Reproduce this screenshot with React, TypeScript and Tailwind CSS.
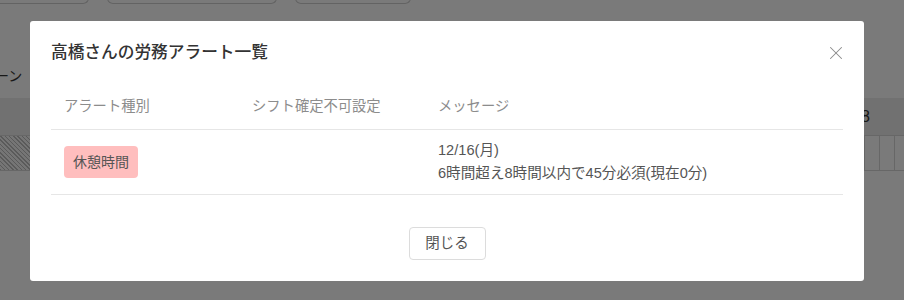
import { X } from 'lucide-react';

const font = { fontFamily: '"Liberation Sans", "Noto Sans CJK JP", sans-serif' };

const Page = () => (
  <div className="h-[300px] w-[904px] overflow-hidden bg-white text-[#333]">
    {/* top toolbar buttons, cut off above the window */}
    <div className="flex h-[4px] items-end">
      <div className="-ml-2 h-[10px] w-[97px] rounded-b-md border border-t-0 border-[#d0d0d0]" />
      <div className="ml-[18px] h-[10px] w-[170px] rounded-b-md border border-t-0 border-[#d0d0d0]" />
      <div className="ml-[18px] h-[10px] w-[116px] rounded-b-md border border-t-0 border-[#d0d0d0]" />
    </div>
    <div className="mt-[62px] -ml-[5px] text-sm">ーン</div>
    <div className="mt-[12px] flex h-[37px] items-center justify-end bg-[#ececec] pr-[34px] text-base">
      <span>8</span>
    </div>
    <div className="flex h-[36px] border-y border-[#d8d8d8]">
      <div className="w-[34px] bg-[repeating-linear-gradient(45deg,#bdbdbd_0px,#bdbdbd_1px,#f4f4f4_1px,#f4f4f4_3px)]" />
      <div className="flex-1" />
      <div className="flex">
        <div className="w-[8px] border-l border-[#d8d8d8]" />
        <div className="w-[15px] border-l border-[#d8d8d8]" />
        <div className="w-[15px] border-l border-[#d8d8d8]" />
        <div className="w-[10px] border-l border-[#d8d8d8]" />
      </div>
    </div>
  </div>
);

export default function App() {
  return (
    <div className="relative h-[300px] w-[904px] overflow-hidden" style={font}>
      <Page />
      <div className="absolute inset-0 bg-black/[0.52]" />
      <div className="absolute left-[30px] top-[21px] w-[834px] rounded-[3px] bg-white px-[21px] pb-[21px]">
        <div className="flex h-[64px] items-center justify-between">
          <h2 className="text-[16.7px] font-medium text-[#333]">高橋さんの労務アラート一覧</h2>
          <button className="-mr-[4px] text-[#8a8a8a]">
            <X size={22} strokeWidth={1.1} />
          </button>
        </div>
        <div className="grid h-[45px] grid-cols-[188px_186px_1fr] items-center border-b border-[#e6e6e6] text-[14.3px] text-[#8c8c8c]">
          <div className="pl-[13px]">アラート種別</div>
          <div className="pl-[13px]">シフト確定不可設定</div>
          <div className="pl-[13px]">メッセージ</div>
        </div>
        <div className="grid h-[65px] grid-cols-[188px_186px_1fr] items-center border-b border-[#e6e6e6] text-[14px] text-[#555]">
          <div className="pl-[13px]">
            <span className="inline-flex h-[32px] items-center rounded-[4px] bg-[#ffbebe] px-[9px]">休憩時間</span>
          </div>
          <div />
          <div className="pl-[13px] text-[14.6px] leading-[23px]">
            <div>12/16(月)</div>
            <div>6時間超え8時間以内で45分必須(現在0分)</div>
          </div>
        </div>
        <div className="flex justify-center pt-[32px]">
          <button className="h-[33px] w-[77px] rounded-[4px] border border-[#dcdcdc] bg-white text-[14.5px] text-[#555]">
            閉じる
          </button>
        </div>
      </div>
    </div>
  );
}
